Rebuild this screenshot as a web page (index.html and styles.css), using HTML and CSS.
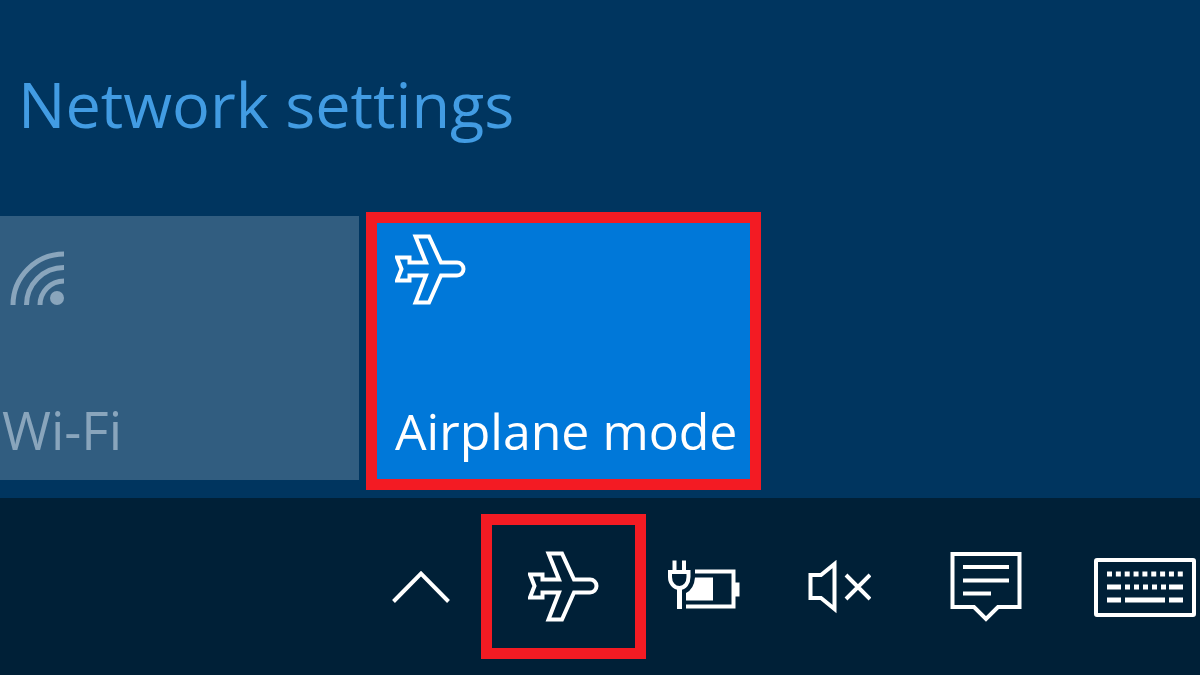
FILE: index.html
```html
<!DOCTYPE html>
<html lang="en">
<head>
    <meta charset="utf-8">
    <title>Network settings</title>
    <link rel="stylesheet" href="styles.css">
</head>
<body>
    <!-- shared plane outline -->
    <svg class="defs" width="0" height="0" aria-hidden="true">
        <symbol id="plane" viewBox="0 0 72 72">
            <path d="M2 23.500H14.500V28.500H31L20.500 2.500H34L46 28.500H62A6.500 6.500 0 0 1 62 41.500H46L34 68.500H20.500L31 41.500H14.500V46.500H2L6.500 35Z" fill="none" stroke="currentColor" stroke-width="4"/>
        </symbol>
    </svg>

    <main class="flyout">
        <a class="settings-link" href="#">Network settings</a>
        <div class="tiles">
            <button class="tile tile-wifi" type="button">
                <svg class="wifi-icon" viewBox="0 0 54 54" aria-hidden="true">
                    <g fill="none" stroke="currentColor" stroke-width="5">
                        <circle cx="54" cy="54" r="51"/>
                        <circle cx="54" cy="54" r="37.500"/>
                        <circle cx="54" cy="54" r="24"/>
                    </g>
                    <circle cx="47" cy="47" r="7" fill="currentColor"/>
                </svg>
                <span>Wi-Fi</span>
            </button>
            <button class="tile tile-airplane highlight" type="button">
                <svg class="plane-icon" aria-hidden="true"><use href="#plane"/></svg>
                <span>Airplane mode</span>
            </button>
        </div>
    </main>

    <footer class="taskbar">
        <button class="tray tray-more" type="button" aria-label="Show hidden icons">
            <svg width="58" height="34" viewBox="0 0 58 34" aria-hidden="true">
                <path d="M1.500 31.500L29 3.500L56.500 31.500" fill="none" stroke="currentColor" stroke-width="4"/>
            </svg>
        </button>
        <button class="tray tray-airplane highlight" type="button" aria-label="Airplane mode">
            <svg class="plane-icon" aria-hidden="true"><use href="#plane"/></svg>
        </button>
        <button class="tray tray-battery" type="button" aria-label="Battery">
            <svg width="72" height="54" viewBox="0 0 72 54" aria-hidden="true">
                <path d="M27 11.500H65.500V46.500H18" fill="none" stroke="currentColor" stroke-width="4"/>
                <path d="M67 22.500H71.500V36.500H67Z" fill="currentColor"/>
                <path d="M27 17.500H45V40.500H18V33Q26 29 27 17.500Z" fill="currentColor"/>
                <path d="M6.500 0.500V12M16 0.500V12" stroke="currentColor" stroke-width="4"/>
                <path d="M2 12H20.500V17C20.500 23 17 28 11.500 28S2 23 2 17Z" fill="none" stroke="currentColor" stroke-width="4"/>
                <path d="M11.500 28V49" stroke="currentColor" stroke-width="5"/>
            </svg>
        </button>
        <button class="tray tray-volume" type="button" aria-label="Volume muted">
            <svg width="64" height="54" viewBox="0 0 64 54" aria-hidden="true">
                <path d="M3.500 15H14L27.500 4V49L14 38H3.500Z" fill="none" stroke="currentColor" stroke-width="4"/>
                <path d="M39 15L63 39M63 15L39 39" stroke="currentColor" stroke-width="4"/>
            </svg>
        </button>
        <button class="tray tray-action" type="button" aria-label="Action center">
            <svg width="72" height="72" viewBox="0 0 72 72" aria-hidden="true">
                <path d="M2.500 3H69.500V56H48L36 68L24 56H2.500Z" fill="none" stroke="currentColor" stroke-width="4"/>
                <path d="M13 16H59M13 29.500H59M13 42.500H41" stroke="currentColor" stroke-width="4"/>
            </svg>
        </button>
        <button class="tray tray-keyboard" type="button" aria-label="Touch keyboard">
            <svg width="102" height="60" viewBox="0 0 102 60" aria-hidden="true">
                <rect x="2" y="3" width="98" height="55" rx="1" fill="none" stroke="currentColor" stroke-width="4"/>
                <path d="M13 17H90" fill="none" stroke="currentColor" stroke-width="5" stroke-dasharray="5 3.850"/>
                <path d="M13 30H27M31 30H36M40 30H45M49 30H54M58 30H63M67 30H72M75 30H89" stroke="currentColor" stroke-width="5"/>
                <path d="M13 43H27M31 43H71M75 43H89" stroke="currentColor" stroke-width="5"/>
            </svg>
        </button>
    </footer>
</body>
</html>
```

FILE: styles.css
```css
* {
    box-sizing: border-box;
}
body {
    margin: 0;
    min-height: 100vh;
    display: flex;
    flex-direction: column;
    background: #00355f;
    font-family: "Open Sans", "Noto Sans", sans-serif;
    overflow-x: hidden;
}
button {
    margin: 0;
    padding: 0;
    border: 0;
    background: none;
    color: #fff;
    font: inherit;
    cursor: pointer;
}
svg {
    display: block;
    flex-shrink: 0;
}
.defs {
    position: absolute;
}
.plane-icon {
    width: 72px;
    height: 72px;
}
.highlight {
    border: 11px solid #f31b23;
}

/* network panel */
.flyout {
    flex: 1;
    padding: 60px 0 8px;
}
.settings-link {
    display: block;
    padding-left: 18px;
    color: #429ce3;
    font-size: 63px;
    line-height: 88px;
    text-decoration: none;
}
.tiles {
    display: flex;
    align-items: flex-start;
    gap: 7px;
    margin-top: 64px;
}
.tile {
    display: flex;
    flex-direction: column;
    justify-content: space-between;
    align-items: flex-start;
    font-size: 50px;
    line-height: 64px;
    white-space: nowrap;
}
.tile-wifi {
    width: 359px;
    height: 264px;
    margin-top: 4px;
    padding: 35px 0 18px 2px;
    background: #315d80;
    color: #89a5bc;
    font-size: 53px;
}
.wifi-icon {
    width: 54px;
    height: 54px;
    margin-left: 8px;
}
.tile-airplane {
    width: 395px;
    height: 278px;
    padding: 11px 0 16px 18px;
    background: #0078d9;
}

/* taskbar */
.taskbar {
    display: flex;
    justify-content: flex-end;
    align-items: center;
    height: 177px;
    background: #002037;
}
.tray {
    display: flex;
    justify-content: center;
    align-items: center;
    height: 145px;
}
.tray-more {
    width: 120px;
}
.tray-airplane {
    width: 165px;
}
.tray-battery {
    width: 116px;
}
.tray-volume {
    width: 154px;
}
.tray-action {
    width: 140px;
}
.tray-keyboard {
    width: 144px;
    justify-content: flex-end;
    padding-right: 4px;
}
```
